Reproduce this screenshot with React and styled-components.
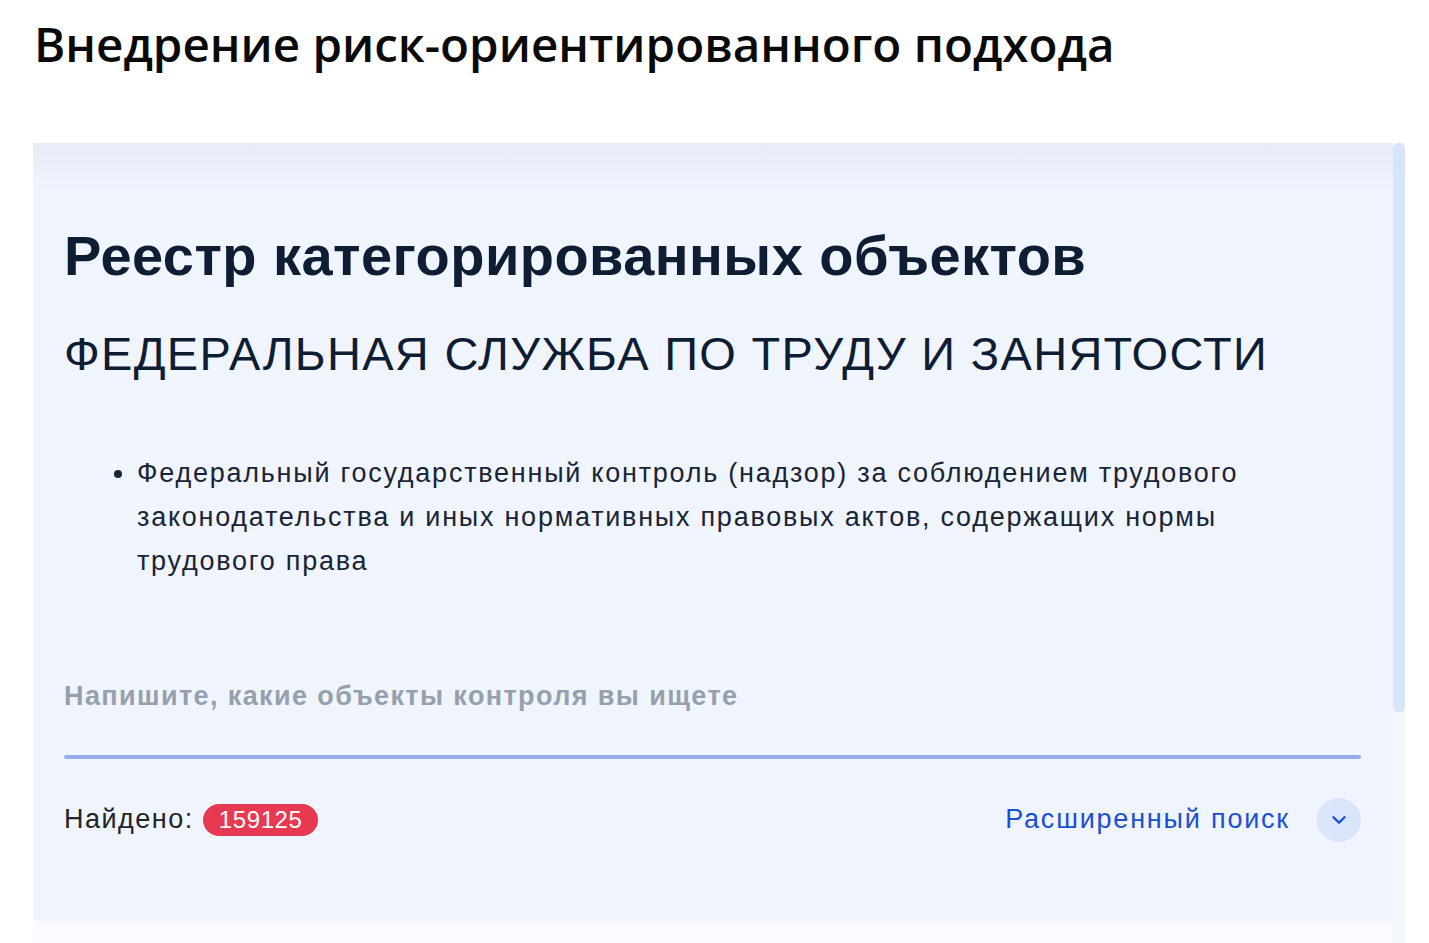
import React from 'react';
import styled, { createGlobalStyle } from 'styled-components';
import { ChevronDown } from 'lucide-react';

const GlobalStyle = createGlobalStyle`
  html, body {
    margin: 0;
    padding: 0;
    background: #ffffff;
  }
  * {
    box-sizing: border-box;
  }
`;

const Page = styled.div`
  height: 100vh;
  overflow: hidden;
  display: flex;
  flex-direction: column;
  padding: 0 24px 0 33px;
`;

const PageTitle = styled.h1`
  margin: 0;
  padding: 15px 0 0 1px;
  font-family: 'Open Sans', 'Noto Sans', sans-serif;
  font-weight: 600;
  font-size: 47.5px;
  line-height: 1.2;
  color: #0a0a0a;
  height: 143px;
`;

const Body = styled.div`
  flex: 1;
  display: flex;
  min-height: 0;
`;

const Column = styled.div`
  flex: 1;
  display: flex;
  flex-direction: column;
`;

const Panel = styled.section`
  background: linear-gradient(180deg, #e6ecf8 0, #eff4fd 48px, #eff4fd 100%);
  padding: 79px 32px 79px 31px;
  font-family: 'Liberation Sans', Arial, sans-serif;
`;

const NextCard = styled.div`
  flex: 1;
  background: #f9fbfe;
`;

const Scrollbar = styled.div`
  width: 12px;
  display: flex;
  flex-direction: column;
  background: #f2f6fd;
`;

const Thumb = styled.div`
  height: 569px;
  border-radius: 6px;
  background: #d7e4f9;
`;

const Heading = styled.h2`
  margin: 0;
  font-size: 56px;
  letter-spacing: 0.45px;
  line-height: 1.2;
  font-weight: 700;
  color: #0f1d33;
`;

const Agency = styled.div`
  margin-top: 37px;
  font-size: 47px;
  letter-spacing: 1.3px;
  line-height: 1.2;
  color: #0f1d33;
`;

const Controls = styled.ul`
  margin: 68px 0 0;
  padding-left: 73px;
  font-size: 27px;
  letter-spacing: 1.75px;
  line-height: 44px;
  color: #1a2436;
`;

const SearchField = styled.label`
  display: block;
  margin-top: 98px;
`;

const SearchInput = styled.input`
  display: block;
  width: 100%;
  border: none;
  outline: none;
  background: transparent;
  height: 74px;
  padding: 0 0 42px;
  font-family: 'Liberation Sans', Arial, sans-serif;
  font-size: 27px;
  letter-spacing: 1.4px;
  font-weight: 700;
  line-height: 31px;
  color: #1a2436;

  &::placeholder {
    color: #96a0ad;
    opacity: 1;
  }
`;

const Underline = styled.div`
  height: 4px;
  border-radius: 2px;
  background: #93ade6;
`;

const ResultRow = styled.div`
  margin-top: 39px;
  height: 44px;
  display: flex;
  align-items: center;
  justify-content: space-between;
`;

const Found = styled.div`
  display: flex;
  align-items: center;
  gap: 9px;
  font-size: 27px;
  letter-spacing: 1.5px;
  color: #222428;
`;

const Badge = styled.span`
  height: 32px;
  padding: 0 16px;
  border-radius: 16px;
  background: #e83952;
  color: #ffffff;
  font-size: 24px;
  letter-spacing: 0.6px;
  display: inline-flex;
  align-items: center;
`;

const Advanced = styled.button`
  display: flex;
  align-items: center;
  gap: 27px;
  border: none;
  background: transparent;
  padding: 0;
  cursor: pointer;
  font-family: 'Liberation Sans', Arial, sans-serif;
  font-size: 27px;
  letter-spacing: 1.8px;
  color: #1b4fd5;
`;

const Round = styled.span`
  width: 44px;
  height: 44px;
  border-radius: 50%;
  background: #d9e5fb;
  display: flex;
  align-items: center;
  justify-content: center;
  color: #1b4fd5;
`;

export default function App() {
  return (
    <>
      <GlobalStyle />
      <Page>
        <PageTitle>Внедрение риск-ориентированного подхода</PageTitle>
        <Body>
          <Column>
            <Panel>
              <Heading>Реестр категорированных объектов</Heading>
              <Agency>ФЕДЕРАЛЬНАЯ СЛУЖБА ПО ТРУДУ И ЗАНЯТОСТИ</Agency>
              <Controls>
                <li>
                  Федеральный государственный контроль (надзор) за соблюдением трудового
                  законодательства и иных нормативных правовых актов, содержащих нормы
                  трудового права
                </li>
              </Controls>
              <SearchField>
                <SearchInput placeholder="Напишите, какие объекты контроля вы ищете" />
                <Underline />
              </SearchField>
              <ResultRow>
                <Found>
                  Найдено:
                  <Badge>159125</Badge>
                </Found>
                <Advanced>
                  Расширенный поиск
                  <Round>
                    <ChevronDown size={22} strokeWidth={2.6} />
                  </Round>
                </Advanced>
              </ResultRow>
            </Panel>
            <NextCard />
          </Column>
          <Scrollbar>
            <Thumb />
          </Scrollbar>
        </Body>
      </Page>
    </>
  );
}
